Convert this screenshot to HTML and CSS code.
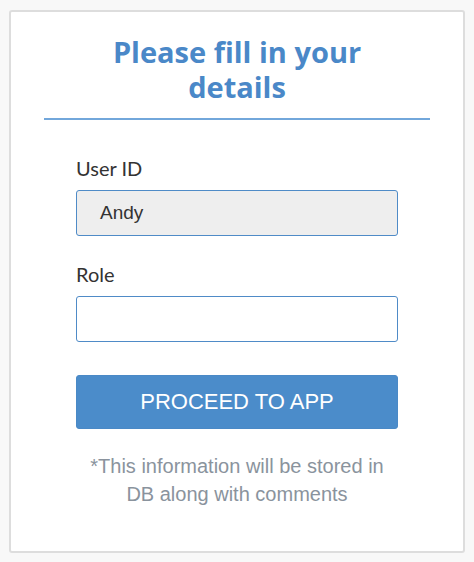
FILE: index.html
```html
<!DOCTYPE html>
<html>
<head>
<meta charset="utf-8">
<link rel="stylesheet" href="styles.css">
</head>
<body>
<div class="card">
  <h1 class="title">Please fill in your details</h1>
  <div class="divider"></div>
  <form class="form">
    <label class="label">User ID</label>
    <div class="input input-disabled">Andy</div>
    <label class="label label-role">Role</label>
    <div class="input"></div>
    <button type="button" class="btn">PROCEED TO APP</button>
    <p class="note">*This information will be stored in DB along with comments</p>
  </form>
</div>
</body>
</html>
```
FILE: styles.css
```css
html, body {
  margin: 0;
  padding: 0;
  background: #f8f8f8;
}
body {
  padding: 10px 9px;
}
.card {
  box-sizing: border-box;
  width: 456px;
  height: 543px;
  background: #fff;
  border: 2px solid #dddddd;
  border-radius: 3px;
  padding: 22px 33px 0;
}
.title {
  margin: 0 auto;
  width: 300px;
  text-align: center;
  font-family: "Open Sans", Lato, sans-serif;
  font-weight: 700;
  font-size: 29px;
  line-height: 35px;
  color: #4a88c8;
}
.divider {
  margin-top: 14px;
  border-top: 2px solid #72a7db;
}
.form {
  width: 322px;
  margin: 36px auto 0;
  display: flex;
  flex-direction: column;
}
.label {
  font-family: Lato, "Open Sans", sans-serif;
  font-size: 20px;
  line-height: 24px;
  color: #333;
  margin-bottom: 10px;
}
.label-role {
  margin-top: 26px;
}
.input {
  box-sizing: border-box;
  height: 46px;
  border: 1px solid #4f8bc7;
  border-radius: 3px;
  background: #fff;
  font-family: "Liberation Sans", Arial, sans-serif;
  font-size: 19px;
  line-height: 44px;
  color: #333;
  padding-left: 23px;
}
.input-disabled {
  background: #eeeeee;
}
.btn {
  margin-top: 33px;
  height: 54px;
  border: 1px solid #4a89c6;
  border-radius: 3px;
  background: #4b8cca;
  color: #fff;
  font-family: "Liberation Sans", Arial, sans-serif;
  font-size: 22px;
  padding: 0;
}
.note {
  margin: 23px auto 0;
  width: 300px;
  text-align: center;
  font-family: "Liberation Sans", Arial, sans-serif;
  font-size: 20px;
  line-height: 28px;
  color: #8a939d;
}
```
